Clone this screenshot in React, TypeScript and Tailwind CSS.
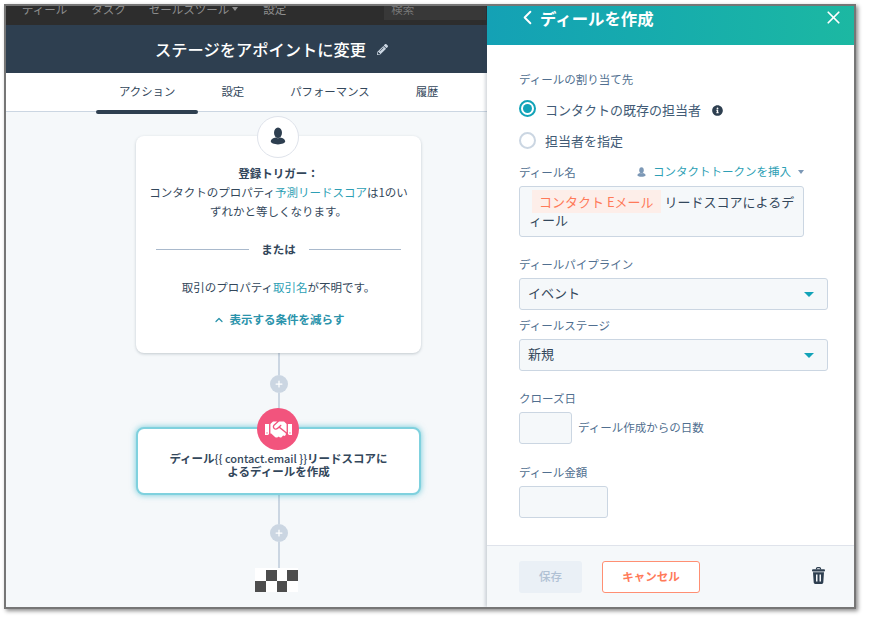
import { ChevronLeft, ChevronUp, Plus, X } from "lucide-react";
import { FaHandshake, FaInfoCircle, FaPencilAlt } from "react-icons/fa";

const font = "font-['Noto_Sans_CJK_JP','Noto_Sans',sans-serif]";

function PersonIcon({ className }: { className?: string }) {
  return (
    <svg viewBox="0 0 20 22" className={className} fill="currentColor">
      <ellipse cx="10" cy="7" rx="5" ry="6.5" />
      <path d="M1 18c0-3 3.5-4.5 6-5 1.5 1 4.500 1 6 0 2.500.5 6 2 6 5 0 2-4 3.500-9 3.500S1 20 1 18z" />
    </svg>
  );
}

function TrashIcon({ className }: { className?: string }) {
  return (
    <svg viewBox="0 0 13 17" className={className} fill="currentColor">
      <path d="M4.500 2.500V1.600a1 1 0 0 1 1-1h2a1 1 0 0 1 1 1v.9" fill="none" stroke="currentColor" strokeWidth="1.200" />
      <rect x="0" y="2.200" width="13" height="2.300" rx="1" />
      <path
        fillRule="evenodd"
        d="M1 5.300h11l-.7 10.200a1.500 1.500 0 0 1-1.500 1.400H3.200a1.500 1.500 0 0 1-1.500-1.400zM4 7.500v7h1.500v-7zm3.500 0v7H9v-7z"
      />
    </svg>
  );
}

function AddButton() {
  return (
    <div className="w-[18px] h-[18px] rounded-full bg-[#cbd6e2] flex items-center justify-center text-white">
      <Plus size={10} strokeWidth={3} />
    </div>
  );
}

function Connector({ height }: { height: number }) {
  return <div className="w-[2px] bg-[#cbd6e2]" style={{ height }} />;
}

function Radio({ checked }: { checked?: boolean }) {
  return (
    <div
      className={
        checked
          ? "w-[17px] h-[17px] -mt-[3px] rounded-full border-2 border-[#12a3b8] bg-white flex items-center justify-center"
          : "w-[17px] h-[17px] rounded-full border-2 border-[#cbd6e2] bg-white"
      }
    >
      {checked && <div className="w-[9px] h-[9px] rounded-full bg-[#12a3b8]" />}
    </div>
  );
}

function Select({ value }: { value: string }) {
  return (
    <div className="mt-[5px] w-[309px] h-[32px] bg-[#f5f8fa] border border-[#cbd6e2] rounded-[3px] pl-[8px] pr-[13px] flex items-center justify-between text-[13px] text-[#33475b]">
      <span className="pb-[2px]">{value}</span>
      <span className="w-0 h-0 border-x-[5px] border-x-transparent border-t-[5px] border-t-[#12a3b8]" />
    </div>
  );
}

function Label({ children, className = "" }: { children: string; className?: string }) {
  return <div className={`h-[18px] leading-[18px] text-[11.5px] text-[#516f90] ${className}`}>{children}</div>;
}

export default function App() {
  return (
    <div className={`w-[869px] h-[622px] bg-white pt-[4px] pl-[4px] overflow-hidden ${font}`}>
      <div className="w-[852px] h-[605px] border-2 border-[#767676] shadow-[2px_2px_4px_rgba(0,0,0,0.45)] flex overflow-hidden">
        {/* Workflow side */}
        <div className="w-[481px] h-full flex flex-col shrink-0">
          <div className="h-[19px] bg-[#2d2d2d] text-[11.5px] text-[#8e8e8e] overflow-hidden shrink-0">
            <div className="flex items-center -mt-[9px] pl-[16px] leading-[18px] whitespace-nowrap">
              <span>ディール</span>
              <span className="ml-[24px]">タスク</span>
              <span className="ml-[23px]">セールスツール</span>
              <span className="ml-[3px] w-0 h-0 border-x-[3px] border-x-transparent border-t-[4px] border-t-[#8e8e8e]" />
              <span className="ml-[25px]">設定</span>
              <div className="ml-[98px] w-[102px] h-[23px] bg-[#383838] pl-[7px] pt-[3px] text-[#777]">検索</div>
            </div>
          </div>
          <div className="h-[48px] bg-[#2e3f50] flex items-center justify-center gap-[11px] pl-[50px] text-white shrink-0">
            <span className="text-[16.25px] font-medium">ステージをアポイントに変更</span>
            <FaPencilAlt size={11} className="text-[#cbd6e2]" />
          </div>
          <div className="h-[39px] bg-white border-b border-[#cbd6e2] flex pl-[90px] text-[11.4px] text-[#33475b] shrink-0">
            <div className="relative px-[23px] flex items-center">
              アクション
              <div className="absolute left-0 right-0 -bottom-[3px] h-[4px] rounded-full bg-[#2e3f50]" />
            </div>
            <div className="px-[23px] flex items-center">設定</div>
            <div className="px-[23px] flex items-center">パフォーマンス</div>
            <div className="px-[23px] flex items-center">履歴</div>
          </div>

          <div className="flex-1 bg-[#f5f8fa] overflow-hidden flex flex-col pl-[130px] pt-[24px]">
            <div className="relative w-[285px] h-[217px] bg-white rounded-[8px] shadow-[0_1px_3px_rgba(45,62,80,0.25)] text-center text-[11.5px] text-[#33475b] pt-[28px] shrink-0">
              <div className="absolute -top-[20px] left-[121px] w-[42px] h-[42px] rounded-full bg-white border border-[#dfe3eb] flex items-center justify-center pb-[3px] text-[#2e3f50]">
                <PersonIcon className="w-[16px] h-[18px]" />
              </div>
              <div className="font-bold leading-[19px]">登録トリガー：</div>
              <div className="leading-[19px] px-[12px]">
                コンタクトのプロパティ<span className="text-[#2e9fb5]">予測リードスコア</span>は1のいずれかと等しくなります。
              </div>
              <div className="flex items-center mx-[20px] mt-[19px] h-[19px]">
                <div className="flex-1 h-px bg-[#a9b9cc]" />
                <span className="w-[60px] font-bold">または</span>
                <div className="flex-1 h-px bg-[#a9b9cc]" />
              </div>
              <div className="mt-[19px] leading-[19px]">
                取引のプロパティ<span className="text-[#2e9fb5]">取引名</span>が不明です。
              </div>
              <div className="mt-[13px] leading-[19px] font-bold text-[#2a93ab] flex items-center justify-center gap-[5px]">
                <ChevronUp size={12} strokeWidth={2.5} />
                表示する条件を減らす
              </div>
            </div>

            <div className="w-[285px] flex flex-col items-center shrink-0">
              <Connector height={22} />
              <AddButton />
              <Connector height={34} />
            </div>

            <div className="relative w-[285px] h-[68px] bg-white rounded-[8px] border-2 border-[#7fd1de] shadow-[0_0_6px_rgba(0,164,189,0.55)] text-center text-[11.5px] leading-[13px] font-bold text-[#33475b] pt-[23px] px-[27px] shrink-0">
              <div className="absolute -top-[21px] left-[119px] w-[42px] h-[42px] rounded-full bg-[#f2547d] flex items-center justify-center text-white">
                <FaHandshake size={27} />
              </div>
              ディール<span className="font-medium text-[11px]">{"{{ contact.email }}"}</span>リードスコアによるディールを作成
            </div>

            <div className="w-[285px] flex flex-col items-center shrink-0">
              <Connector height={29} />
              <AddButton />
              <Connector height={26} />
              {/* finish flag */}
              <div className="w-[43px] h-[24px] mr-[4px] grid grid-cols-4 grid-rows-2 pt-[2px] bg-white">
                <div className="bg-white" />
                <div className="bg-[#4d4d4d]" />
                <div className="bg-white" />
                <div className="bg-[#4d4d4d]" />
                <div className="bg-[#4d4d4d]" />
                <div className="bg-white" />
                <div className="bg-[#4d4d4d]" />
                <div className="bg-white" />
              </div>
            </div>
          </div>
        </div>

        {/* Deal panel */}
        <div className="flex-1 h-full bg-white flex flex-col shadow-[-2px_0_3px_rgba(45,62,80,0.2)] z-10">
          <div className="h-[39px] bg-linear-to-r from-[#14a1b5] to-[#1cb8a2] flex justify-between text-white shrink-0">
            <div className="flex items-center pl-[29px] pb-[16px] gap-[1px]">
              <ChevronLeft size={23} strokeWidth={2} />
              <span className="text-[16.4px] font-bold leading-[20px]">ディールを作成</span>
            </div>
            <X size={21} strokeWidth={2} className="mt-[1px] mr-[10px]" />
          </div>

          <div className="flex-1 pl-[32px] pt-[25px] text-[#33475b]">
            <Label>ディールの割り当て先</Label>
            <div className="mt-[12px] h-[20px] flex items-center text-[13px] text-[#425b76]">
              <Radio checked />
              <span className="ml-[9px]">コンタクトの既存の担当者</span>
              <FaInfoCircle size={11} className="ml-[11px] mt-[1px] text-[#2e3f50]" />
            </div>
            <div className="mt-[10px] h-[20px] flex items-center text-[13px] text-[#425b76]">
              <Radio />
              <span className="ml-[9px] mt-[1px]">担当者を指定</span>
            </div>
            <div className="mt-[13px] w-[285px] flex items-center justify-between">
              <Label>ディール名</Label>
              <div className="flex items-center text-[11.5px] text-[#2e9fb5]">
                <PersonIcon className="w-[9px] h-[10px] text-[#7c98b6]" />
                <span className="ml-[7px]">コンタクトトークンを挿入</span>
                <span className="ml-[7px] w-0 h-0 border-x-[3px] border-x-transparent border-t-[4px] border-t-[#7c98b6]" />
              </div>
            </div>
            <div className="mt-[5px] w-[285px] h-[51px] bg-[#f5f8fa] border border-[#cbd6e2] rounded-[3px] pl-[9px] pr-[6px] pt-[6px] text-[13px] leading-[18px] text-[#33475b]">
              <span className="ml-[3px] mr-[4px] py-[2px] px-[7px] bg-[#fdeee9] text-[#ff7a59]">コンタクト Eメール</span>
              リードスコアによるディール
            </div>
            <Label className="mt-[18px]">ディールパイプライン</Label>
            <Select value="イベント" />
            <Label className="mt-[6px]">ディールステージ</Label>
            <Select value="新規" />
            <Label className="mt-[18px]">クローズ日</Label>
            <div className="mt-[5px] flex items-center">
              <div className="w-[53px] h-[32px] bg-[#f5f8fa] border border-[#cbd6e2] rounded-[3px]" />
              <span className="ml-[6px] text-[11.5px] text-[#516f90]">ディール作成からの日数</span>
            </div>
            <Label className="mt-[19px]">ディール金額</Label>
            <div className="mt-[5px] w-[89px] h-[32px] bg-[#f5f8fa] border border-[#cbd6e2] rounded-[3px]" />
          </div>

          <div className="h-[62px] bg-[#f5f8fa] border-t border-[#dfe3eb] pl-[32px] pr-[29px] flex items-center shrink-0">
            <div className="w-[63px] h-[32px] bg-[#eaf0f6] rounded-[3px] flex items-center justify-center text-[11.5px] font-medium text-[#b0c1d4]">保存</div>
            <div className="ml-[20px] w-[98px] h-[32px] bg-white border border-[#ff8f73] rounded-[3px] flex items-center justify-center text-[11.5px] font-bold text-[#ff7a59]">キャンセル</div>
            <TrashIcon className="ml-auto mb-[3px] w-[13px] h-[17px] text-[#2e3f50]" />
          </div>
        </div>
      </div>
    </div>
  );
}
